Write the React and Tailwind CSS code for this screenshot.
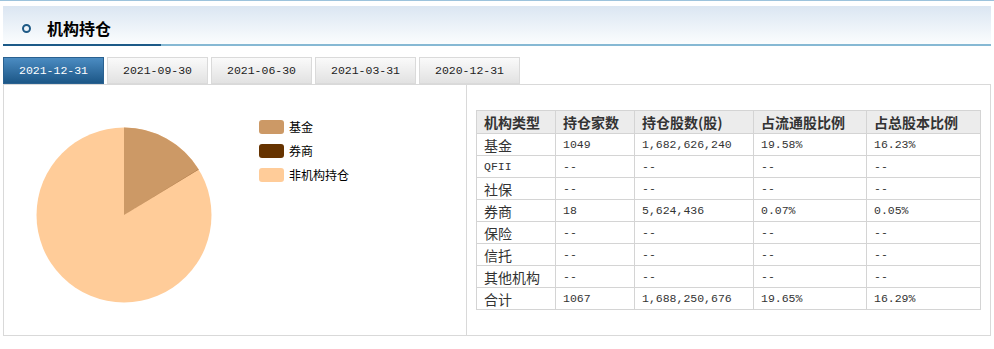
import React from "react";

const tabs = ["2021-12-31", "2021-09-30", "2021-06-30", "2021-03-31", "2020-12-31"];

const rows = [
  ["基金", "1049", "1,682,626,240", "19.58%", "16.23%"],
  ["QFII", "--", "--", "--", "--"],
  ["社保", "--", "--", "--", "--"],
  ["券商", "18", "5,624,436", "0.07%", "0.05%"],
  ["保险", "--", "--", "--", "--"],
  ["信托", "--", "--", "--", "--"],
  ["其他机构", "--", "--", "--", "--"],
  ["合计", "1067", "1,688,250,676", "19.65%", "16.29%"],
];

const heads = ["机构类型", "持仓家数", "持仓股数(股)", "占流通股比例", "占总股本比例"];

function Pie() {
  const cx = 88, cy = 88, r = 87.5;
  const pt = (deg) => {
    const a = (deg * Math.PI) / 180;
    return [cx + r * Math.sin(a), cy - r * Math.cos(a)];
  };
  const f1 = 16.23 * 3.6;
  const f2 = f1 + 0.05 * 3.6;
  const [x1, y1] = pt(f1);
  const [x2, y2] = pt(f2);
  return (
    <svg width="176" height="176" viewBox="0 0 176 176">
      <circle cx={cx} cy={cy} r={r} fill="#ffcc99" />
      <path d={`M${cx},${cy} L${cx},${cy - r} A${r},${r} 0 0 1 ${x1},${y1} Z`} fill="#cc9966" />
      <path d={`M${cx},${cy} L${x1},${y1} A${r},${r} 0 0 1 ${x2},${y2} Z`} fill="#663300" />
    </svg>
  );
}

export default function App() {
  const cjk = { fontFamily: '"Noto Sans CJK SC", "Liberation Sans", sans-serif' };
  return (
    <div className="w-[994px] h-[349px] bg-white overflow-hidden" style={cjk}>
      <div className="h-px bg-[#9cc3dc]" />
      {/* header */}
      <div className="ml-[3px] mt-[5px] w-[988px]">
        <div className="h-[38px] pt-[6px] flex items-center bg-gradient-to-b from-[#dbe6f2] to-[#fbfdfe]">
          <div className="ml-[19px] w-[9px] h-[9px] rounded-full border-2 border-[#1e5a86]" />
          <div className="ml-[16px] text-[16px] font-bold text-black leading-none">机构持仓</div>
        </div>
        <div className="flex h-[2px]">
          <div className="w-[158px] bg-[#1c5a88]" />
          <div className="flex-1 bg-[#86b9d4]" />
        </div>
      </div>
      {/* tabs */}
      <div className="ml-[3px] mt-[11px] flex gap-[3px] h-[27px]">
        {tabs.map((t, i) => (
          <div
            key={t}
            className={
              i === 0
                ? "w-[101px] h-[27px] flex items-center justify-center text-white bg-gradient-to-b from-[#4b8cc2] to-[#1c5787] border border-[#2a6190]"
                : "w-[101px] h-[27px] flex items-center justify-center text-[#222] bg-gradient-to-b from-[#fafafa] to-[#e2e2e2] border border-[#dadada]"
            }
            style={{ fontFamily: '"Liberation Mono", monospace', fontSize: "11.5px" }}
          >
            {t}
          </div>
        ))}
      </div>
      {/* content */}
      <div className="ml-[3px] w-[988px] h-[252px] border border-[#d9d9d9] flex">
        <div className="w-[462px] flex">
          <div className="ml-[32px] mt-[42px]">
            <Pie />
          </div>
          <div className="ml-[47px] mt-[35px] flex flex-col gap-[10px]">
            {[
              ["#cc9966", "基金"],
              ["#663300", "券商"],
              ["#ffcc99", "非机构持仓"],
            ].map(([c, l]) => (
              <div key={l} className="flex items-center h-[14px] gap-[5px]">
                <div className="w-[25px] h-[14px] rounded-[3px]" style={{ backgroundColor: c }} />
                <span className="text-[12px] text-black leading-none">{l}</span>
              </div>
            ))}
          </div>
        </div>
        <div className="flex-1 border-l border-[#d9d9d9] pl-[9px] pt-[25px]">
          <table className="border-collapse table-fixed w-[504px]">
            <colgroup>
              <col className="w-[79px]" />
              <col className="w-[79px]" />
              <col className="w-[119px]" />
              <col className="w-[113px]" />
              <col className="w-[114px]" />
            </colgroup>
            <thead>
              <tr className="h-[23px] bg-[#ececec]">
                {heads.map((h) => (
                  <th key={h} className="border border-[#d4d4d4] text-left pl-[7px] p-0 text-[14px] font-bold text-[#333] leading-none">
                    {h}
                  </th>
                ))}
              </tr>
            </thead>
            <tbody>
              {rows.map((r) => (
                <tr key={r[0]} className="h-[22px]">
                  {r.map((c, j) => (
                    <td
                      key={j}
                      className={
                        j === 0 && c !== "QFII"
                          ? "border border-[#d4d4d4] pl-[7px] p-0 text-[14px] text-[#333] leading-none"
                          : "border border-[#d4d4d4] pl-[7px] p-0 text-[#333] leading-none"
                      }
                      style={j === 0 && c !== "QFII" ? undefined : { fontFamily: '"Liberation Mono", monospace', fontSize: "11.5px" }}
                    >
                      {c}
                    </td>
                  ))}
                </tr>
              ))}
            </tbody>
          </table>
        </div>
      </div>
    </div>
  );
}
